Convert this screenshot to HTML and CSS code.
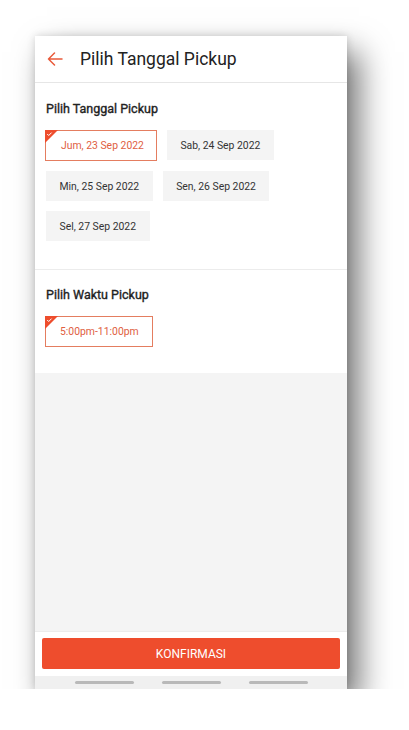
FILE: index.html
```html
<!DOCTYPE html>
<html lang="id">
<head>
<meta charset="utf-8">
<title>Pilih Tanggal Pickup</title>
<link rel="stylesheet" href="styles.css">
</head>
<body>
<div class="phone">
  <header class="appbar">
    <svg class="back" width="16" height="14" viewBox="0 0 16 14"><path d="M15 7H1.5M7.5 1L1.5 7l6 6" fill="none" stroke="#e95a3a" stroke-width="1.5" stroke-linecap="round" stroke-linejoin="round"/></svg>
    <h1 class="title">Pilih Tanggal Pickup</h1>
  </header>
  <main class="content">
    <section class="section">
      <h2 class="section-title">Pilih Tanggal Pickup</h2>
      <div class="chips">
        <div class="chip selected"><svg class="tick" width="13" height="13" viewBox="0 0 13 13"><path d="M0 0H13L0 13Z" fill="#ee4d2d"/><path d="M2.2 4l1.5 1.5L6.6 2.6" fill="none" stroke="#fff" stroke-width="1"/></svg>Jum, 23 Sep 2022</div>
        <div class="chip">Sab, 24 Sep 2022</div>
        <div class="chip">Min, 25 Sep 2022</div>
        <div class="chip">Sen, 26 Sep 2022</div>
        <div class="chip">Sel, 27 Sep 2022</div>
      </div>
    </section>
    <section class="section second">
      <h2 class="section-title">Pilih Waktu Pickup</h2>
      <div class="chips">
        <div class="chip selected wide"><svg class="tick" width="13" height="13" viewBox="0 0 13 13"><path d="M0 0H13L0 13Z" fill="#ee4d2d"/><path d="M2.2 4l1.5 1.5L6.6 2.6" fill="none" stroke="#fff" stroke-width="1"/></svg>5:00pm-11:00pm</div>
      </div>
    </section>
  </main>
  <footer class="bottom">
    <button class="confirm">KONFIRMASI</button>
  </footer>
  <div class="navbar"><span></span><span></span><span></span></div>
</div>
</body>
</html>
```
FILE: styles.css
```css
* { box-sizing: border-box; }
html, body { margin: 0; padding: 0; background: #fff; }
body { font-family: Roboto, "Noto Sans", Arial, sans-serif; color: #222; }
.phone {
  margin: 36px 0 0 35px;
  width: 312px;
  height: 653px;
  background: #f4f4f4;
  display: flex;
  flex-direction: column;
  box-shadow: 12px 16px 30px rgba(0,0,0,0.55), 0 0 8px rgba(0,0,0,0.15);
}
.appbar {
  height: 47px;
  background: #fff;
  border-bottom: 1px solid #e6e6e6;
  display: flex;
  align-items: center;
  padding-left: 12px;
  flex-shrink: 0;
}
.back { margin-right: 17px; }
.title { margin: 0; font-size: 17.5px; font-weight: 400; color: #222; }
.content { flex: 1; }
.section { background: #fff; padding: 18px 11px 28px 10px; }
.section.second { border-top: 1px solid #ececec; padding-bottom: 26px; padding-top: 17px; }
.section-title {
  margin: 0 0 14px 1px;
  font-size: 12.5px;
  font-weight: 400;
  color: #222;
  line-height: 15px;
  -webkit-text-stroke: 0.35px #222;
}
.chips { display: flex; flex-wrap: wrap; gap: 10px 9px; }
.chip {
  position: relative;
  height: 30px;
  padding: 0 13.5px;
  background: #f4f4f4;
  font-size: 10.4px;
  color: #333;
  display: flex;
  align-items: center;
  margin-left: 1px;
}
.chip.selected {
  height: 31px;
  background: #fff;
  border: 1px solid #e47d60;
  color: #e0603f;
  margin-left: 0;
  padding: 0 12px 0 15px;
}
.chip.wide { width: 108px; padding: 0 0 0 14px; }
.tick { position: absolute; top: -1px; left: -1px; }
.bottom {
  height: 45px;
  background: #fff;
  border-top: 1px solid #ececec;
  padding: 6px 7px 0;
  flex-shrink: 0;
}
.confirm {
  width: 100%;
  height: 31px;
  border: 0;
  border-radius: 2px;
  background: #ee4d2d;
  color: #fff;
  font-family: Roboto, "Noto Sans", Arial, sans-serif;
  font-size: 12px;
}
.navbar {
  height: 13px;
  background: #f0f0f0;
  display: flex;
  justify-content: center;
  align-items: center;
  gap: 28px;
  flex-shrink: 0;
}
.navbar span { width: 59px; height: 3px; border-radius: 2px; background: #b9b9b9; }
```
